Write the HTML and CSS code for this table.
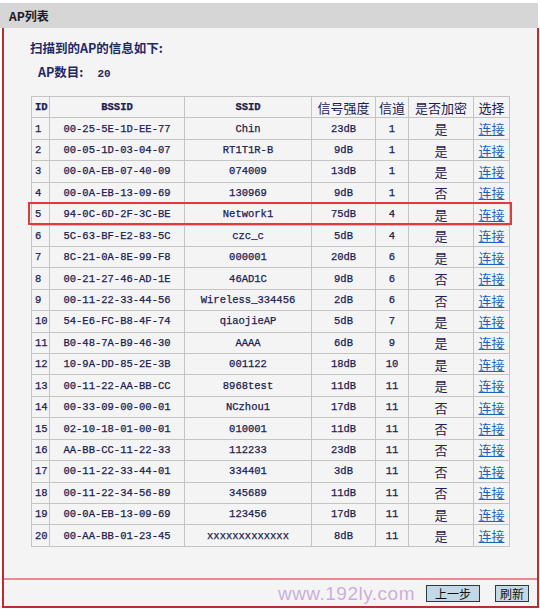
FILE: index.html
```html
<!DOCTYPE html>
<html>
<head>
<meta charset="utf-8">
<link rel="stylesheet" href="styles.css">
</head>
<body>
<div class="titlebar">AP列表</div>
<div class="panel">
  <div class="content">
    <div class="heading">扫描到的AP的信息如下:</div>
    <div class="count"><span class="cjk">AP数目:</span><span class="num">20</span></div>
    <div class="tablewrap">
      <table class="aps">
        <thead>
          <tr><th class="c-id">ID</th><th class="c-bssid">BSSID</th><th class="c-ssid">SSID</th><th class="c-sig cjk">信号强度</th><th class="c-ch cjk">信道</th><th class="c-enc cjk">是否加密</th><th class="c-sel cjk">选择</th></tr>
        </thead>
        <tbody id="rows"></tbody>
      </table>
      <div class="highlight"></div>
    </div>
  </div>
  <div class="footer">
    <span class="watermark">www.192ly.com</span>
    <button class="btn">上一步</button>
    <button class="btn">刷新</button>
  </div>
</div>
<script src="app.js"></script>
</body>
</html>
```

FILE: app.js
```js
const data = [
["00-25-5E-1D-EE-77","Chin","23dB","1","是"],
["00-05-1D-03-04-07","RT1T1R-B","9dB","1","是"],
["00-0A-EB-07-40-09","074009","13dB","1","是"],
["00-0A-EB-13-09-69","130969","9dB","1","否"],
["94-0C-6D-2F-3C-BE","Network1","75dB","4","是"],
["5C-63-BF-E2-83-5C","czc_c","5dB","4","是"],
["8C-21-0A-8E-99-F8","000001","20dB","6","是"],
["00-21-27-46-AD-1E","46AD1C","9dB","6","否"],
["00-11-22-33-44-56","Wireless_334456","2dB","6","否"],
["54-E6-FC-B8-4F-74","qiaojieAP","5dB","7","是"],
["B0-48-7A-B9-46-30","AAAA","6dB","9","是"],
["10-9A-DD-85-2E-3B","001122","18dB","10","是"],
["00-11-22-AA-BB-CC","8968test","11dB","11","是"],
["00-33-09-00-00-01","NCzhou1","17dB","11","否"],
["02-10-18-01-00-01","010001","11dB","11","否"],
["AA-BB-CC-11-22-33","112233","23dB","11","否"],
["00-11-22-33-44-01","334401","3dB","11","否"],
["00-11-22-34-56-89","345689","11dB","11","否"],
["00-0A-EB-13-09-69","123456","17dB","11","是"],
["00-AA-BB-01-23-45","xxxxxxxxxxxxx","8dB","11","是"]
];
const tb = document.getElementById('rows');
data.forEach((r, i) => {
  const tr = document.createElement('tr');
  tr.innerHTML = `<td class="c-id">${i+1}</td><td>${r[0]}</td><td>${r[1]}</td><td>${r[2]}</td><td>${r[3]}</td><td class="cjk">${r[4]}</td><td class="cjk"><a href="#" class="link">连接</a></td>`;
  tb.appendChild(tr);
});
```

FILE: styles.css
```css
* { box-sizing: border-box; }
html, body { margin: 0; padding: 0; background: #fff; }
body {
  width: 540px;
  height: 610px;
  font-family: "Liberation Mono", "Noto Sans CJK SC", monospace;
  color: #1a2150;
}
.cjk { font-family: "Noto Sans CJK SC", sans-serif; }
.titlebar {
  margin-top: 3px;
  height: 25px;
  background: #d6d6d6;
  padding-left: 9px;
  font-family: "Noto Sans CJK SC", sans-serif;
  font-weight: bold;
  font-size: 12px;
  line-height: 25px;
  color: #1a1a2a;
  width: 538px;
}
.panel {
  margin-left: 2px;
  width: 537px;
  height: 580px;
  border: 2px solid #b8302e;
  border-top: none;
  background: #f4f4f4;
  display: flex;
  flex-direction: column;
}
.content {
  height: 550px;
  padding: 11px 0 0 26px;
}
.heading {
  font-family: "Noto Sans CJK SC", sans-serif;
  font-weight: bold;
  font-size: 12.5px;
  line-height: 18px;
  color: #1e2a66;
}
.count {
  margin-top: 6px;
  padding-left: 8px;
  line-height: 18px;
  font-size: 12.5px;
  font-weight: bold;
  color: #1e2a66;
}
.count .num {
  font-family: "Liberation Mono", monospace;
  font-size: 11px;
  margin-left: 14px;
}
.tablewrap {
  position: relative;
  margin-top: 13px;
  margin-left: 1px;
  width: 478px;
}
.aps {
  border-collapse: collapse;
  width: 478px;
  table-layout: fixed;
  border: 1px solid #b0b0b0;
}
.aps th, .aps td {
  border: 1px solid #c4c4c4;
  height: 21.43px;
  padding: 0;
  text-align: center;
  font-size: 10.5px;
  font-weight: normal;
  vertical-align: middle;
  white-space: nowrap;
  overflow: hidden;
  -webkit-text-stroke: 0.25px #1a2150;
}
.aps td.cjk, .aps th.cjk { font-size: 13px; -webkit-text-stroke: 0; }
.aps th { font-weight: bold; }
.aps th.cjk { font-weight: normal; }
.aps .c-id { width: 18px; text-align: left; padding-left: 3px; }
.aps .c-bssid { width: 135px; }
.aps .c-ssid { width: 127px; }
.aps .c-sig { width: 64px; }
.aps .c-ch { width: 33px; }
.aps .c-enc { width: 65px; }
.aps .c-sel { width: 36px; }
.link { color: #1a64c0; text-decoration: underline; }
.highlight {
  position: absolute;
  left: -3px;
  top: 106px;
  width: 484px;
  height: 23px;
  border: 2px solid #e23b3b;
}
.footer {
  position: relative;
  height: 28px;
  border-top: 2px solid #e38d8d;
  display: flex;
  justify-content: flex-end;
  align-items: center;
  gap: 15px;
  padding-right: 8px;
}
.watermark {
  position: absolute;
  right: 122px;
  top: 3px;
  font-family: "Liberation Sans", sans-serif;
  font-size: 19px;
  color: rgba(190, 150, 210, 0.75);
  letter-spacing: 0.5px;
}
.btn {
  height: 17px;
  padding: 0 4px;
  font-family: "Noto Sans CJK SC", sans-serif;
  font-size: 12px;
  line-height: 13px;
  background: #c3d9e6;
  border: 1px solid #2a3a40;
  color: #111;
}
.btn:first-of-type { width: 54px; }
.btn:last-of-type { width: 34px; }
```
